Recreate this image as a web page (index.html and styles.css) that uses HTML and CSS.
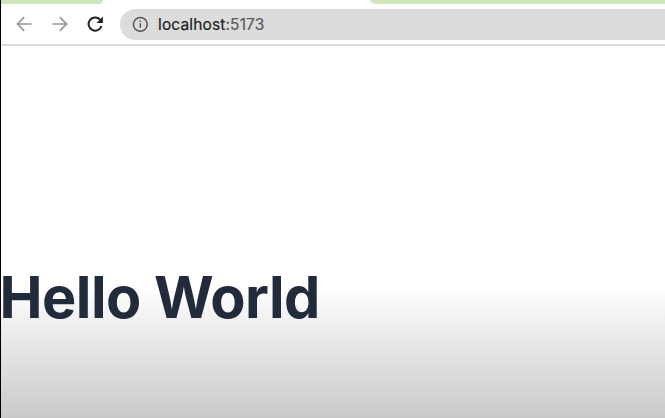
FILE: index.html
```html
<!DOCTYPE html>
<html lang="en">
<head>
<meta charset="utf-8">
<title>Hello World</title>
<link rel="stylesheet" href="styles.css">
</head>
<body>
<div class="window">
  <div class="tabs"><div class="tab tab-left"></div><div class="tab tab-right"></div></div>
  <div class="toolbar">
    <svg class="nav" width="16" height="16" viewBox="0 0 16 16"><path d="M15.500 8H2M8.200 1.200L1.400 8L8.200 14.800"/></svg>
    <svg class="nav" width="16" height="16" viewBox="0 0 16 16"><path d="M.5 8H14M7.800 1.200L14.600 8L7.800 14.800"/></svg>
    <svg class="reload" width="16" height="16" viewBox="0 0 16 16"><path class="arc" d="M13 3.500A6.600 6.600 0 1 0 14.500 10"/><path class="head" d="M15.900 .6V7H9.500Z"/></svg>
    <div class="address">
      <svg class="info" width="16" height="16" viewBox="0 0 16 16"><circle cx="8.300" cy="8.300" r="6.900"/><path d="M8.300 7.200V11.800M8.300 4.400V6"/></svg>
      <span class="url">localhost<span class="port">:5173</span></span>
    </div>
  </div>
  <main class="page"><h1>Hello World</h1></main>
</div>
</body>
</html>
```
FILE: styles.css
```css
* { box-sizing: border-box; }
body { margin: 0; background: #fff; overflow: hidden; font-family: Inter, sans-serif; }
.window { height: 418px; display: flex; flex-direction: column; border-left: 1px solid #000; }
.tabs { height: 5px; display: flex; justify-content: space-between; }
.tab { height: 4px; background: #cee5bc; }
.tab-left { width: 102px; border-bottom-right-radius: 5px 4px; }
.tab-right { width: 295px; border-bottom-left-radius: 7px 4px; }
.toolbar { height: 41px; padding: 4px 0 5px 15px; display: flex; align-items: center; border-bottom: 2px solid #dcdcdc; }
.toolbar svg { flex: none; fill: none; }
.nav { stroke: #989898; stroke-width: 1.7; margin-right: 20px; }
.toolbar .reload { margin-left: -1px; }
.arc { stroke: #202124; stroke-width: 2; }
.head { fill: #202124; }
.address { flex: 1; height: 31px; margin-left: 17px; padding-left: 12px; display: flex; align-items: center; background: #dcdcdc; border-radius: 16px 0 0 16px; }
.info { stroke: #555; stroke-width: 1.5; margin-right: 10px; }
.url { font-size: 15.5px; line-height: 20px; padding-top: 1px; letter-spacing: .14px; color: #202124; -webkit-text-stroke: .2px; }
.port { color: #5a5a5a; }
.page { flex: 1; padding-top: 216px; background: linear-gradient(#fff 244px, #f0f0f0 274px, #dedede 322px, #c9c9c9 372px); }
h1 { margin: 0 0 0 -1.5px; font-size: 57.6px; line-height: 70px; font-weight: 700; letter-spacing: -.52px; color: #222b3c; white-space: nowrap; }
```
